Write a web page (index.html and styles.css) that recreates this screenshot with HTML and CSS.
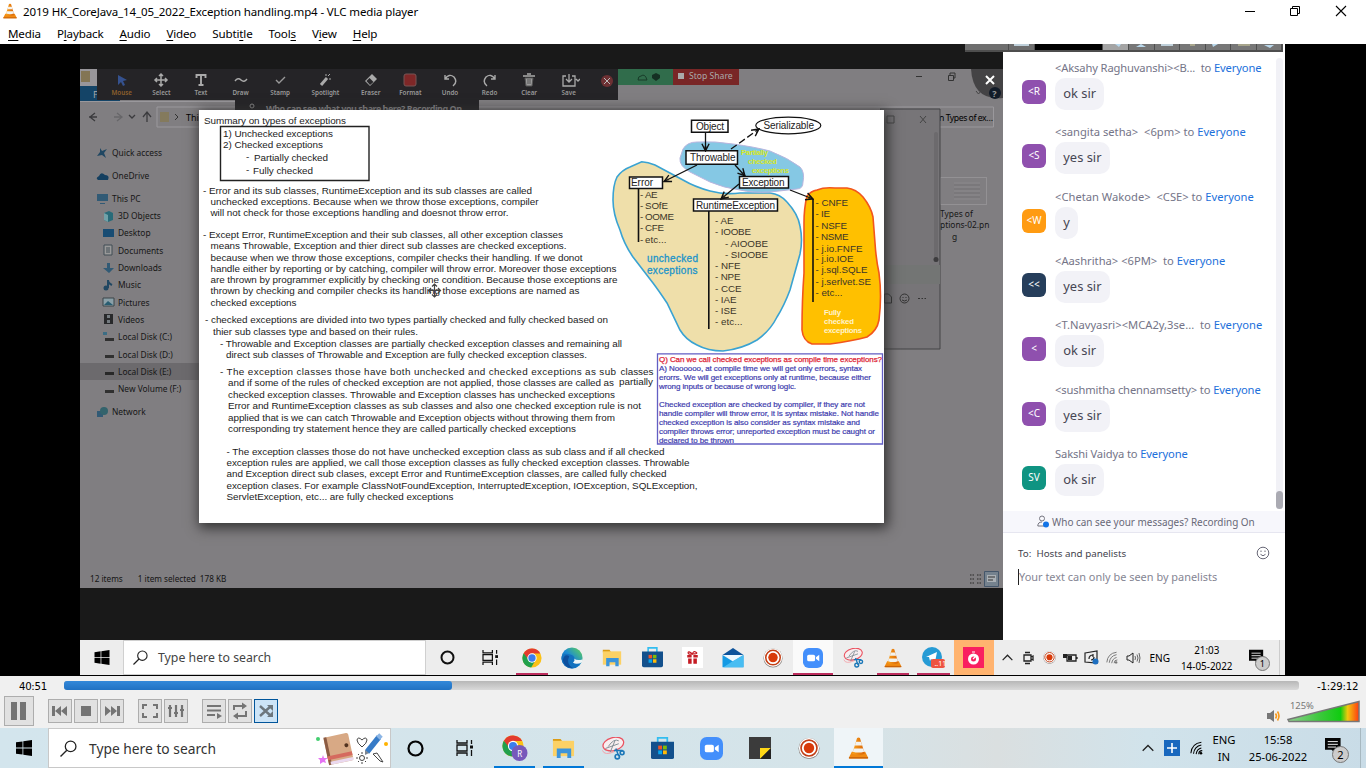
FILE: index.html
```html
<!DOCTYPE html>
<html lang="en">
<head>
<meta charset="utf-8">
<title>VLC media player</title>
<link rel="stylesheet" href="styles.css">
</head>
<body>
<svg class="defs" width="0" height="0" aria-hidden="true">
  <defs>
    <linearGradient id="coneFill"><stop offset="0" stop-color="#f9a11b"/><stop offset="1" stop-color="#d9650a"/></linearGradient>
    <linearGradient id="edgeFill" x1="0" y1="1" x2="1" y2="0"><stop offset="0" stop-color="#0c59a4"/><stop offset=".5" stop-color="#1b8ad3"/><stop offset="1" stop-color="#66d84e"/></linearGradient>
    <linearGradient id="volFill"><stop offset="0" stop-color="#8fcf8f"/><stop offset=".45" stop-color="#3cc83c"/><stop offset=".74" stop-color="#10cc10"/><stop offset=".84" stop-color="#f2c80e"/><stop offset="1" stop-color="#ff3a10"/></linearGradient>
    <marker id="arrow" viewBox="0 0 10 10" refX="9" refY="5" markerWidth="9" markerHeight="9" markerUnits="userSpaceOnUse" orient="auto"><path d="M1 1 9 5 1 9M4 3 9 5 4 7" fill="none" stroke="#111" stroke-width="1.5"/></marker>
    <symbol id="cone" viewBox="0 0 24 24"><path d="M5 16h14l3 6q0 1-1 1H3q-1 0-1-1z" fill="#f08a12"/><path d="M2 21.500h20v1.500H2z" fill="#c9620a"/><path d="M10.500 1.500q1.500-1 3 0L18.500 18q-6.500 3-13 0z" fill="url(#coneFill)"/><path d="M9.300 5.500h5.400l1.100 3.800H8.200zM7.100 12.500h9.800l1 3.300q-6 2-11.800 0z" fill="#f3f3ef"/></symbol>
    <symbol id="win" viewBox="0 0 16 16"><path d="M0 2.300 6.500 1.400v6.200H0zM7.300 1.300 16 0v7.600H7.300zM0 8.400h6.500v6.200L0 13.700zM7.300 8.400H16V16l-8.700-1.300z" fill="currentColor"/></symbol>
    <symbol id="search" viewBox="0 0 16 16"><circle cx="10" cy="6" r="5" fill="none" stroke="#222" stroke-width="1.200"/><path d="M6.400 9.600.500 15.500" stroke="#222" stroke-width="1.300"/></symbol>
    <symbol id="taskview" viewBox="0 0 18 16"><path d="M1 0v3h10V0M1 16v-3h10v3M1 5h10v6H1zM15.500 0v4M15.500 10v6" fill="none" stroke="#111" stroke-width="1.300"/><path d="M14 5.500h3v3h-3z" fill="#111"/></symbol>
    <symbol id="chrome" viewBox="0 0 24 24"><circle cx="12" cy="12" r="11.500" fill="#fbc116"/><path d="M2 6.200A11.500 11.500 0 0 1 22 6.500H12L6.500 14z" fill="#e33b2e"/><path d="M2 6.200A11.500 11.500 0 0 0 11 23.500L16 15l-8-1z" fill="#21a04c"/><circle cx="12" cy="12" r="5.600" fill="#fff"/><circle cx="12" cy="12" r="4.400" fill="#3b7ded"/></symbol>
    <symbol id="edge" viewBox="0 0 24 24"><circle cx="12" cy="12" r="11.500" fill="url(#edgeFill)"/><path d="M.800 10Q3 7 8 7.500q7 1 7 6 0 2-1.500 3 4 2 8.700-1-2.700 7-10.200 8Q2 22 .500 13z" fill="#1372bf"/><path d="M9 10q-4 8 4 13Q3 23 2 14q2-7 7-4z" fill="#0d4f9d"/><path d="M14 12.500q2 2-1 4.500 4 3 10-.500v-3q-5 2-9-1z" fill="#eef5f6"/></symbol>
    <symbol id="folder" viewBox="0 0 24 24"><path d="M1 2h8l2 3H1z" fill="#dc9c14"/><path d="M1 4h22v16H1z" fill="#fcd165"/><path d="M5 22V12h15v10h-4v-5h-7v5z" fill="#3b94db"/></symbol>
    <symbol id="store" viewBox="0 0 24 24"><path d="M7 6V1h10v5" fill="none" stroke="#32bdf0" stroke-width="1.800"/><path d="M0 5h24v16q0 2-2 2H2q-2 0-2-2z" fill="#13508c"/><path d="M7.500 9h4v4h-4z" fill="#f35325"/><path d="M12.500 9h4v4h-4z" fill="#81bc06"/><path d="M7.500 14h4v4h-4z" fill="#05a6f0"/><path d="M12.500 14h4v4h-4z" fill="#ffba08"/></symbol>
    <symbol id="gift" viewBox="0 0 24 24"><path d="M0 0h24v24H0z" fill="#fff"/><path d="M6 9h5v3H6zM13 9h5v3h-5zM7 13h4v6H7zM13 13h4v6h-4z" fill="#c51b23"/><path d="M12 8Q7 9 7 6.500T12 8q1-4 4-2t-4 2" fill="none" stroke="#c51b23" stroke-width="1.400"/></symbol>
    <symbol id="mail" viewBox="0 0 24 24"><path d="M0 9 12 1l12 8z" fill="#0d539b"/><path d="M2 9h20l-10 8z" fill="#edf8ff"/><path d="M0 9l12 7.500L24 9v14H0z" fill="#149ae4"/><path d="M12 16 24 9v14H1z" fill="#48bdf2"/></symbol>
    <symbol id="record" viewBox="0 0 24 24"><circle cx="12" cy="12" r="11.500" fill="#8c8480"/><circle cx="12" cy="11.500" r="11" fill="#fff"/><circle cx="12" cy="11.500" r="8.700" fill="none" stroke="#c23e15" stroke-width="1.800"/><circle cx="12" cy="11.500" r="5.700" fill="#d83a09"/></symbol>
    <symbol id="zoomapp" viewBox="0 0 24 24"><rect width="24" height="24" rx="7" fill="#438ffb"/><rect x="5" y="8" width="9.500" height="8" rx="2" fill="#fff"/><path d="m15.500 11 4-2.800v7.600l-4-2.800z" fill="#fff"/></symbol>
    <symbol id="snip" viewBox="0 0 24 24"><ellipse cx="12.500" cy="7.500" rx="11" ry="6.800" fill="#f8eef0" stroke="#ea5260" stroke-width="1.300" transform="rotate(-15 12 8)"/><path d="M7 10Q13 1 18 4M4 12l14-5M9 16l5-12" fill="none" stroke="#7f8c94"/><path d="M1 14q2 6 13 1" fill="none" stroke="#f3a1a8"/><path d="m13 14 9 0M15 12l3 8" stroke="#1b77b8" stroke-width="1.500"/><g fill="none" stroke="#1b77b8" stroke-width="1.700"><circle cx="16.500" cy="20.500" r="2.300"/><circle cx="21.500" cy="16.500" r="2"/></g></symbol>
    <symbol id="wifi" viewBox="0 0 16 16"><path d="M1 14Q2 3 13 1.500M4 14.500Q5 6 13 4.500M7 15q1-6 6-7M10 15q0-4 4-4" fill="none" stroke="currentColor" stroke-width="1.200"/><circle cx="12.500" cy="14" r="1.500" fill="currentColor"/></symbol>
    <symbol id="chev" viewBox="0 0 12 7"><path d="m.700 6.300 5.300-5.300 5.300 5.300" fill="none" stroke="#222" stroke-width="1.300"/></symbol>
    <symbol id="note" viewBox="0 0 24 24"><path d="M0 1h17v13h-5v4l-5-4H0z" fill="#050505"/><path d="M3 5h11M3 8h11M3 11h9" stroke="#fff"/></symbol>
    <symbol id="smile" viewBox="0 0 14 14"><circle cx="7" cy="7" r="5.800" fill="none" stroke="currentColor"/><path d="M4.500 8.300q2.500 3 5 0M5 4.500v1.500M9 4.500v1.500" fill="none" stroke="currentColor"/></symbol>
  </defs>
</svg>

<div class="app">
  <header class="titlebar">
    <svg width="16" height="18"><use href="#cone"/></svg>
    <span class="title">2019 HK_CoreJava_14_05_2022_Exception handling.mp4 - VLC media player</span>
    <svg class="winbtns" width="106" height="14"><path d="M1 7.500h10" stroke="#000"/><path d="M46.500 4.500h7v7h-7zM48.500 4v-1.500h7v7H54" fill="none" stroke="#000"/><path d="m92 2 10 10M102 2 92 12" stroke="#000" stroke-width="1.100"/></svg>
  </header>
  <nav class="menubar"><span><u>M</u>edia</span><span>P<u>l</u>ayback</span><span><u>A</u>udio</span><span><u>V</u>ideo</span><span>Subti<u>t</u>le</span><span>Tool<u>s</u></span><span>V<u>i</u>ew</span><span><u>H</u>elp</span></nav>

  <main class="video">
    <div class="capture">
      <div class="capture-top">
        <section class="stage">
          <div class="explorer">
            <aside class="tree">
              <div class="node root"><svg width="13" height="12"><path d="m4 1 2 3 5-2-3 4 2 5-4-3-5 1 3-4z" fill="#204762"/></svg>Quick access</div>
              <div class="node root"><svg width="13" height="12"><path d="M2 10Q-1 8 3 6q2-5 6-1 5 0 3 5z" fill="#143f60"/></svg>OneDrive</div>
              <div class="node root pc"><svg width="13" height="12"><path d="M1 1h11v7H1zM4 10h5v1H4z" fill="#315a75"/></svg>This PC</div>
              <div class="node"><svg width="13" height="12"><path d="m2 3 5-2 4 2v7l-5 2-4-2z" fill="#286b79"/><path d="M2 3l4 2v7l-4-2z" fill="#71a1a8"/></svg>3D Objects</div>
              <div class="node"><svg width="13" height="12"><path d="M1 2h11v8H1z" fill="#184c73"/></svg>Desktop</div>
              <div class="node"><svg width="13" height="12"><path d="M2 1h8v10H2zM4 4h4M4 6h4M4 8h4" fill="#999" stroke="#414d55"/></svg>Documents</div>
              <div class="node"><svg width="13" height="12"><path d="M5 1h3v5h4l-5 5-6-5h4z" fill="#315a75"/></svg>Downloads</div>
              <div class="node"><svg width="13" height="12"><path d="M6 9V1q0 3 4 5" fill="none" stroke="#204762" stroke-width="2"/><circle cx="4" cy="9" r="2.500" fill="#204762"/></svg>Music</div>
              <div class="node"><svg width="13" height="12"><path d="M1 2h11v8H1z" fill="#8aa0a8" stroke="#3b4449"/><path d="m2 9 4-4 5 4z" fill="#285d71"/></svg>Pictures</div>
              <div class="node"><svg width="13" height="12"><path d="M2 1h9v10H2z" fill="#28292b"/><path d="M5 2h3v3H5zM5 7h3v3H5z" fill="#747b80"/></svg>Videos</div>
              <div class="node"><svg width="13" height="12"><path d="M3 7h9v3H3z" fill="#303030"/><path d="M1 1h4v3H1z" fill="#3c6d84"/></svg>Local Disk (C:)</div>
              <div class="node"><svg width="13" height="12"><path d="M3 7h9v3H3z" fill="#303030"/></svg>Local Disk (D:)</div>
              <div class="node on"><svg width="13" height="12"><path d="M3 7h9v3H3z" fill="#282828"/></svg>Local Disk (E:)</div>
              <div class="node"><svg width="13" height="12"><path d="M3 7h9v3H3z" fill="#303030"/></svg>New Volume (F:)</div>
              <div class="node root net"><svg width="13" height="12"><path d="M1 5h6v6H1z" fill="#315a75"/><circle cx="8" cy="5" r="4" fill="#33636c"/></svg>Network</div>
            </aside>
            <footer class="status"><span>12 items</span><span>1 item selected</span><span class="kb">178 KB</span>
              <svg width="32" height="18"><path d="M2 5h4M2 9h4M2 13h4M9 5h4M9 9h4M9 13h4" stroke="#444" stroke-width="1.500" stroke-dasharray="1.500 1"/><path d="M16.500 1.500h14v15h-14z" fill="#75828e" stroke="#44566a"/><path d="M19 5h9v7h-9z" fill="#aab0b5"/><path d="M20 7h7M20 10h5" stroke="#333"/></svg></footer>
          </div>
          <svg class="chrome-layer" width="923" height="60" viewBox="80 69 923 60">
            <path d="M80 69h17v17H80z" fill="#98969a"/><path d="M81 71h9v11h-9z" fill="#837554"/><path d="M80 86h40v15H80z" fill="#144467"/><text x="93" y="98" font-size="9" fill="#aaa">F</text>
            <path d="M80 101h235v1H80z" fill="#9a989c"/>
            <path d="m95 113-5 4 5 4M89 117h8M117 113l5 4-5 4M114 117h7" fill="none" stroke="#3b3b3e" stroke-width="1.300"/><path d="M113 112h12v10h-12z" fill="#807e81" opacity=".65"/><path d="m129 115 3 3 3-3M147 122v-9m-4 4 4-5 4 5" fill="none" stroke="#3b3b3e" stroke-width="1.300"/>
            <path d="M157 107h836.500v20H157z" fill="none" stroke="#9a989c"/><path d="M160 112h9v10h-9z" fill="#847a5d"/><path d="m175 114 3 3-3 3" fill="none" stroke="#333"/>
            <text x="186" y="120.500" font-size="9">This</text><text x="939" y="120.500" font-size="8.700" textLength="54">n Types of ex…</text>
            <path d="M916 76.500h6M948.500 75.500h5v5h-5zM950 75v-2h5v5h-2" fill="none" stroke="#333" /><path d="m976 91 2.500 3 2.500-3" fill="none" stroke="#444"/>
            <path d="M971 69h32v29q-30 3-32-29" fill="#444345"/><path d="m986 76 8 8m0-8-8 8" stroke="#fff" stroke-width="2"/><circle cx="995" cy="93" r="6" fill="#121b28"/><text x="992.300" y="96.500" font-size="9" fill="#999" font-weight="bold">?</text>
            <path d="M235 100h244v12H235z" fill="#252427"/><circle cx="252" cy="106" r="2" fill="none" stroke="#888"/><text x="266" y="111.500" font-size="9" fill="#8b898c" font-weight="bold" textLength="196">Who can see what you share here? Recording On</text>
          </svg>
          <div class="share"><svg width="34" height="12"><path d="M3 9h9q-2-7-6-4-3 0-3 4z" fill="none" stroke="#183b29"/><path d="m21 2 4 2v3l-4 3-4-3V4z" fill="#153023"/></svg><b><i></i>Stop Share</b></div>
          <div class="tools">
            <div class="tool mouse"><svg width="16" height="16"><path d="m4 3 9 5-4 1 2 4-2 1-2-4-3 3z" fill="#35518e"/></svg>Mouse</div>
            <div class="tool"><svg width="16" height="16"><path d="M8 2v12M2 8h12M6 4l2-2 2 2M6 12l2 2 2-2M4 6 2 8l2 2M12 6l2 2-2 2" fill="none" stroke="#aaa" stroke-width="1.500"/></svg>Select</div>
            <div class="tool"><svg width="16" height="16"><path d="M3.500 6V3h9v3M8 3v10M5.500 13h5" fill="none" stroke="#aaa" stroke-width="1.900"/></svg>Text</div>
            <div class="tool"><svg width="16" height="16"><path d="M2 9q3-4 6-1 3 3 6-1" fill="none" stroke="#aaa" stroke-width="1.400"/></svg>Draw</div>
            <div class="tool"><svg width="16" height="16"><path d="m4 8 3 3 6-6" fill="none" stroke="#999" stroke-width="1.400"/></svg>Stamp</div>
            <div class="tool spot"><svg width="16" height="16"><path d="m4 13 6-7" stroke="#aaa" stroke-width="3"/><path d="M9 2v2M13 2l-2 2M14 7h-2" stroke="#aaa"/></svg>Spotlight</div>
            <div class="tool"><svg width="16" height="16"><path d="m2 9 7-7 5 5-7 7z" fill="#aaa"/><path d="m3.500 9 3-3 4 4-3.500 3z" fill="#28272a"/></svg>Eraser</div>
            <div class="tool"><svg width="16" height="16"><rect x="2" y="2" width="12" height="12" rx="2" fill="#7e2727" stroke="#765555"/></svg>Format</div>
            <div class="tool"><svg width="16" height="16"><path d="M3 3v4h4M3 7q4-6 9-2 4 5-1 9" fill="none" stroke="#aaa" stroke-width="1.400"/></svg>Undo</div>
            <div class="tool"><svg width="16" height="16"><path d="M13 3v4H9M13 7Q9 1 4 5q-4 5 1 9" fill="none" stroke="#aaa" stroke-width="1.400"/></svg>Redo</div>
            <div class="tool"><svg width="16" height="16"><path d="M2 4h12M6 2h4" stroke="#aaa" stroke-width="1.500"/><path d="M4 6h8l-1 8H5zM7 7v5M9 7v5" fill="#9a9a9a" stroke="#555"/></svg>Clear</div>
            <div class="tool"><svg width="22" height="16"><path d="M8 4H5v10h12V4h-3M11 2v8m-3-3 3 3 3-3M18 7l2 2 2-2" fill="none" stroke="#aaa" stroke-width="1.300"/></svg>Save</div>
            <svg class="close" width="12" height="12"><circle cx="6" cy="6" r="6" fill="#6d3033"/><path d="m3 3 6 6m0-6-6 6" stroke="#bbb"/></svg>
          </div>
          <div class="file"><div class="thumb"><i></i></div>Types of<br>ptions-02.pn<br><span>g</span></div>
          <svg class="backwin" width="61" height="243" viewBox="880 108 61 243"><path d="M880 109h60v240h-60z" fill="#777578" stroke="#454446"/><path d="M880 265h60v19h-60z" fill="#737574"/><path d="M887 116h7v7h-7zM920 116l6 7m0-7-6 7" fill="none" stroke="#444"/><rect x="934" y="132" width="4" height="130" rx="2" fill="#6c6a6d"/><circle cx="936" cy="259.500" r="2.500" fill="#3d3c3e"/><path d="M884.500 294v9h7v-6l-3-3z" fill="none" stroke="#333"/><circle cx="904.500" cy="298.500" r="4.500" fill="none" stroke="#333"/><path d="M902 300q2.500 2 5 0M903 297v1M906 297v1M918 298.500h2m1.500 0h1.500m1.500 0h1.500" stroke="#333" fill="none"/></svg>

          <svg class="board" width="685" height="413" viewBox="199 110 685 413">
            <g fill="#1b1b1b" font-size="9.900">
              <text x="204" y="123.500" textLength="142">Summary on types of exceptions</text>
              <text x="223" y="136.500" textLength="110">1) Unchecked exceptions</text>
              <text x="223" y="147.800" textLength="100">2) Checked exceptions</text>
              <text x="246" y="160">-</text><text x="254" y="161" textLength="74">Partially checked</text>
              <text x="246" y="173">-</text><text x="253" y="173.500" textLength="60">Fully checked</text>
              <text x="203" y="193.500" textLength="329">- Error and its sub classes, RuntimeException and its sub classes are called</text>
              <text x="210.500" y="204.800" textLength="328">unchecked exceptions. Because when we throw those exceptions, compiler</text>
              <text x="210.500" y="216" textLength="298">will not check for those exceptions handling and doesnot throw error.</text>
              <text x="203" y="238.200" textLength="360">- Except Error, RuntimeException and their sub classes, all other exception classes</text>
              <text x="210.500" y="249.400" textLength="356">means Throwable, Exception and thier direct sub classes are checked exceptions.</text>
              <text x="210.500" y="260.600" textLength="372">because when we throw those exceptions, compiler checks their handling. If we donot</text>
              <text x="210.500" y="271.900" textLength="406">handle either by reporting or by catching, compiler will throw error. Moreover those exceptions</text>
              <text x="210.500" y="283.100" textLength="407">are thrown by programmer explicitly by checking one condition. Because those exceptions are</text>
              <text x="210.500" y="294.300" textLength="369">thrown by checking and compiler checks its handling those exceptions are named as</text>
              <text x="210.500" y="305.500" textLength="86">checked exceptions</text>
              <text x="205" y="323.300" textLength="403">- checked exceptions are divided into two types partially checked and fully checked based on</text>
              <text x="213" y="334.500" textLength="205">thier sub classes type and based on their rules.</text>
              <text x="220" y="347" textLength="402">- Throwable and Exception classes are partially checked exception classes and remaining all</text>
              <text x="226" y="358.300" textLength="361">direct sub classes of Throwable and Exception are fully checked exception classes.</text>
              <text x="220" y="374.500" textLength="396">- The exception classes those have both unchecked and checked exceptions as sub</text><text x="620.500" y="374.500" textLength="33">classes</text>
              <text x="228" y="386" textLength="386">and if some of the rules of checked exception are not applied, those classes are called as</text><text x="619" y="385" textLength="34">partially</text>
              <text x="228" y="398" textLength="387">checked exception classes. Throwable and Exception classes has unchecked exceptions</text>
              <text x="228" y="409.300" textLength="413">Error and RuntimeException classes as sub classes and also one checked exception rule is not</text>
              <text x="228" y="420.600" textLength="387">applied that is we can catch Throwable and Exception objects without throwing them from</text>
              <text x="228" y="431.800" textLength="348">corresponding try statement hence they are called partically checked exceptions</text>
              <text x="226.500" y="454.900" textLength="438">- The exception classes those do not have unchecked exception class as sub class and if all checked</text>
              <text x="226.500" y="466.200" textLength="463">exception rules are applied, we call those exception classes as fully checked exception classes. Throwable</text>
              <text x="226.500" y="477.400" textLength="440">and Exception direct sub clases, except Error and RuntimeException classes, are called fully checked</text>
              <text x="226.500" y="488.600" textLength="471">exception clases. For example ClassNotFoundException, InterruptedException, IOException, SQLException,</text>
              <text x="226.500" y="499.800" textLength="227">ServletException, etc... are fully checked exceptions</text>
            </g>
            <path d="M220.500 126.500h148.500v54H220.500z" fill="none" stroke="#222" stroke-width="1.400"/>
            <path d="M641.700 161.700Q648 162 655 165L683 180Q695 187 710 191 725 195 740 193L770 193Q780 194 787 202 798 214 800 226 803 240 800 254L790 290Q784 306 777 317 770 331 757 340 742 349 723 351 708 351 697 345 686 340 680 330L667 303Q659 291 653 283L633 257Q624 244 620 230 613 214 613 200 613 185 617 177 622 170 630 167Z" fill="#efdfaa" stroke="#3aa3d2" stroke-width="1.600"/>
            <path d="M683 149Q687 142 697 142 715 141 733 144 755 147 770 151 788 158 800 167 805 172 803 182 803 189 797 189L770 192Q752 193 740 190 724 188 710 182L690 172Q679 166 680 158Z" fill="#85c8e4" stroke="#b9b5de"/>
            <path d="M817 190Q824 187 835 188L847 188Q856 189 863 197 871 207 873 217L875 243Q876 259 879 273 882 296 879 320 877 331 867 337 852 341 830 344L812 344Q803 341 802 330 802 300 804 273L804 223Q804 208 807 196 811 191 817 190Z" fill="#ffc000" stroke="#f2561d" stroke-width="1.600"/>
            <g fill="#fff" stroke="#111" stroke-width="1.500"><path d="M691.500 120.300h36.500v12h-36.500zM686 150.800h51.500v13.500H686zM629.500 177h33v11.500h-33zM739.500 176.500h49v11.500h-49zM693.500 199h84v12h-84z"/><ellipse cx="788.300" cy="125.500" rx="32.500" ry="8.300" stroke-width="1.200"/></g>
            <g fill="none" stroke="#111" stroke-width="1.300"><path d="M705.500 133v18" marker-end="url(#arrow)"/><path d="m731 149 28-20" stroke-dasharray="7 3" marker-end="url(#arrow)"/><path d="m697 165-33 16.500" marker-end="url(#arrow)"/><path d="m735 165 10 11" marker-end="url(#arrow)"/><path d="m739 184-18 15" marker-end="url(#arrow)"/><path d="m790 190 23 9" marker-end="url(#arrow)"/><path d="M638.500 189v53M708.800 211v118M813 199v103" stroke-width="1.600"/></g>
            <g fill="#222" font-size="10">
              <text x="696" y="129.800" textLength="28">Object</text><text x="763.500" y="129" textLength="50.500">Serializable</text><text x="690" y="161" textLength="45.500">Throwable</text><text x="631" y="186.300" textLength="22">Error</text><text x="742" y="185.800" textLength="42.500">Exception</text><text x="696" y="209" textLength="79">RuntimeException</text>
            </g>
            <g fill="#3b3528" font-size="9.800">
              <text x="640" y="197.500">-</text><text x="645" y="197.500" textLength="12.500">AE</text><text x="640" y="208.800">-</text><text x="645" y="208.800" textLength="23">SOfE</text><text x="640" y="220">-</text><text x="645" y="220" textLength="29">OOME</text><text x="640" y="231.300">-</text><text x="645" y="231.300" textLength="19">CFE</text><text x="640" y="242.500">-</text><text x="645" y="242.500" textLength="21.500">etc...</text>
              <text x="715" y="224" textLength="18.500">- AE</text><text x="715" y="235.300" textLength="36">- IOOBE</text><text x="725" y="246.500" textLength="43">- AIOOBE</text><text x="725" y="257.800" textLength="43">- SIOOBE</text><text x="715" y="269" textLength="25.500">- NFE</text><text x="715" y="280.200" textLength="25.500">- NPE</text><text x="715" y="291.500" textLength="26.500">- CCE</text><text x="715" y="302.700" textLength="21.500">- IAE</text><text x="715" y="314" textLength="21.500">- ISE</text><text x="715" y="325.300" textLength="27.500">- etc...</text>
              <text x="815.500" y="206" textLength="32.500">- CNFE</text><text x="815.500" y="217.300" textLength="14.500">- IE</text><text x="815.500" y="228.500" textLength="31.500">- NSFE</text><text x="815.500" y="239.800" textLength="33">- NSME</text><text x="815.500" y="251.500" textLength="47">- j.io.FNFE</text><text x="815.500" y="262.300" textLength="38">- j.io.IOE</text><text x="815.500" y="273.300" textLength="52">- j.sql.SQLE</text><text x="815.500" y="284.500" textLength="55.500">- j.serlvet.SE</text><text x="815.500" y="296" textLength="27">- etc...</text>
            </g>
            <g fill="#1d94c9" stroke="#1d94c9" stroke-width=".3" font-size="10"><text x="647" y="262.300" textLength="51">unchecked</text><text x="647" y="273.500" textLength="50.500">exceptions</text></g>
            <g fill="#d4e62a" font-size="7.800" font-weight="bold"><text x="741" y="154.500" textLength="27">Partially</text><text x="748" y="163.800" textLength="29">checked</text><text x="752" y="173" textLength="37">exceptions</text></g>
            <g fill="#fff3cb" font-size="7.800" font-weight="bold"><text x="824" y="314.500" textLength="17">Fully</text><text x="824" y="323.500" textLength="30">checked</text><text x="824" y="332.600" textLength="38">exceptions</text></g>
            <path d="M657.500 353.800h225v90.200h-225z" fill="#fff" stroke="#625ec4" stroke-width="1.300"/>
            <text x="659" y="361.500" font-size="8" fill="#dd2637" stroke="#dd2637" stroke-width=".25" textLength="223">Q) Can we call checked exceptions as compile time exceptions?</text>
            <g fill="#3e3cae" stroke="#3e3cae" stroke-width=".2" font-size="8"><text x="659" y="370.600" textLength="203">A) Noooooo, at compile time we will get only errors, syntax</text><text x="659" y="379.600" textLength="212">erorrs. We will get exceptions only at runtime, because either</text><text x="659" y="388.700" textLength="137">wrong inputs or because of wrong logic.</text><text x="659" y="406.800" textLength="206">Checked exception are checked by compiler, if they are not</text><text x="659" y="415.800" textLength="220">handle compiler will throw error, it is syntax mistake. Not handle</text><text x="659" y="424.900" textLength="201">checked exception is also consider as syntax mistake and</text><text x="659" y="434" textLength="216">compiler throws error; unreported exception must be caught or</text><text x="659" y="442.800" textLength="75">declared to be thrown</text></g>
            <path d="M434.500 284v13M428 290.500h13M432 286.500l2.500-2.500 2.500 2.500M432 294.500l2.500 2.500 2.500-2.500M431 288l-2.500 2.500 2.500 2.500M438 288l2.500 2.500-2.500 2.500" fill="none" stroke="#444" stroke-width="1.200"/>
          </svg>
        </section>

        <section class="chat">
          <svg class="strip" width="320" height="8"><path d="M0 0h318v8H0z" fill="#4e4e4e"/><path d="M0 0h43v6H0zM44 0h25v6H44z" fill="#6e6e6e"/><path d="M70 0h67v6H70z" fill="#000"/><path d="M138 0h25v6h-25z" fill="#a4a4a4"/><path d="M164 0h25v6h-25zM190 0h24v6h-24zM215 0h25v6h-25zM241 0h24v6h-24zM266 0h25v6h-25zM292 0h24v6h-24z" fill="#777"/><path d="M49 1h15M196 1h12" stroke="#bfd0da" stroke-width="2"/><path d="m171 3 5-3 5 3zM150 0h6l-2 3zM247 0h6l-5 3zM299 1h10l-4 3z" fill="#b9d8ec"/><path d="M225 1h5M273 1h12" stroke="#d6d2a0"/></svg>
          <div class="messages">
            <article><i class="av purple">&lt;R</i><div><p class="tight">&lt;Aksahy Raghuvanshi&gt;&lt;B...&nbsp; to <b>Everyone</b></p><span>ok sir</span></div></article>
            <article><i class="av purple">&lt;S</i><div><p>&lt;sangita setha&gt;&nbsp; &lt;6pm&gt; to <b>Everyone</b></p><span>yes sir</span></div></article>
            <article><i class="av orange">&lt;W</i><div><p>&lt;Chetan Wakode&gt;&nbsp; &lt;CSE&gt; to <b>Everyone</b></p><span>y</span></div></article>
            <article><i class="av navy">&lt;&lt;</i><div><p>&lt;Aashritha&gt; &lt;6PM&gt;&nbsp; to <b>Everyone</b></p><span>yes sir</span></div></article>
            <article><i class="av purple">&lt;</i><div><p>&lt;T.Navyasri&gt;&lt;MCA2y,3se...&nbsp; to <b>Everyone</b></p><span>ok sir</span></div></article>
            <article><i class="av purple">&lt;C</i><div><p class="tight">&lt;sushmitha chennamsetty&gt; to <b>Everyone</b></p><span>yes sir</span></div></article>
            <article><i class="av teal">SV</i><div><p class="tight">Sakshi Vaidya to <b>Everyone</b></p><span>ok sir</span></div></article>
            <div class="scroll"></div>
          </div>
          <div class="notice"><svg width="13" height="13"><circle cx="5" cy="3.500" r="2.500" fill="none" stroke="#74747f"/><path d="M7 11H.800q0-4 4.200-4" fill="none" stroke="#74747f"/><circle cx="9" cy="9.500" r="3" fill="#1273e6"/></svg>Who can see your messages? Recording On</div>
          <div class="composer"><div class="to"><span>To:&nbsp; Hosts and panelists</span><svg width="14" height="14"><use href="#smile"/></svg></div><div class="input">Your text can only be seen by panelists</div></div>
        </section>
      </div>

      <div class="taskbar inner">
        <div class="start"><svg width="16" height="15"><use href="#win"/></svg></div>
        <div class="search"><svg width="15" height="15"><use href="#search"/></svg><span>Type here to search</span></div>
        <div class="apps">
          <div class="sys"><svg width="15" height="15"><circle cx="7.500" cy="7.500" r="6" fill="none" stroke="#111" stroke-width="2"/></svg></div>
          <div class="sys"><svg width="17" height="15"><use href="#taskview"/></svg></div>
          <div class="run"><svg width="20" height="20"><use href="#chrome"/></svg></div>
          <div><svg width="22" height="22"><use href="#edge"/></svg></div>
          <div><svg width="20" height="20"><use href="#folder"/></svg></div>
          <div><svg width="21" height="21"><use href="#store"/></svg></div>
          <div><svg width="21" height="21"><use href="#gift"/></svg></div>
          <div><svg width="22" height="21"><use href="#mail"/></svg></div>
          <div><svg width="20" height="20"><use href="#record"/></svg></div>
          <div class="run active"><svg width="20" height="20"><use href="#zoomapp"/></svg></div>
          <div><svg width="22" height="20"><use href="#snip"/></svg></div>
          <div class="run"><svg width="20" height="20"><use href="#cone"/></svg></div>
          <div class="run tele"><svg width="24" height="24" viewBox="0 0 24 24"><circle cx="11" cy="11" r="10" fill="#269bd5"/><path d="m5 11 11-5-2 10-4-3-1 2-1-4z" fill="#fff"/><rect x="10" y="13" width="14" height="9" rx="2" fill="#ee5340"/></svg><small>..11</small></div>
          <div class="hot"><svg width="21" height="21" viewBox="0 0 21 21"><path d="M0 0h21v21H0z" fill="#f91f60"/><circle cx="10.500" cy="12" r="4" fill="none" stroke="#fff" stroke-width="3"/><path d="m9 5h3M10 12l3-3" stroke="#fff" stroke-width="1.200"/></svg></div>
        </div>
        <div class="tray">
          <div><svg width="11" height="7"><use href="#chev"/></svg></div>
          <div><svg width="13" height="14"><path d="M2 4h7v6H2zM9 6l2-1v4L9 8M3 1.500h5M3 12.500h5" fill="none" stroke="#222" stroke-width="1.300"/></svg></div>
          <div><svg width="13" height="13"><use href="#record"/></svg></div>
          <div><svg width="15" height="12"><path d="M4 3h9v6H4zM14 5v2" fill="none" stroke="#222" stroke-width="1.300"/><path d="M5 4h4v4H5zM0 2h4v4H0z" fill="#222"/></svg></div>
          <div><svg width="15" height="15"><path d="m1 3 12-2v12L1 12zM5 9q0-4 4-4m0-1v3M10 7q0 3-3 3" fill="none" stroke="#222" stroke-width="1.200"/><circle cx="11.500" cy="11.500" r="3" fill="#1e6fc0"/></svg></div>
          <div class="dim"><svg width="13" height="13"><use href="#wifi"/></svg></div>
          <div><svg width="15" height="12"><path d="M1 4h2l4-3v10L3 8H1z" fill="none" stroke="#222"/><path d="M9 4q1 2 0 4M11 2.500q2 3.500 0 7M13 1q2 5 0 10" fill="none" stroke="#666"/></svg></div>
        </div>
        <div class="lang">ENG</div>
        <div class="clock"><span>21:03</span><span>14-05-2022</span></div>
        <div class="notif"><svg width="20" height="20"><use href="#note"/></svg><em>1</em></div>
      </div>
    </div>
  </main>

  <section class="controls">
    <div class="timeline"><span class="elapsed">40:51</span><div class="seek"><i></i></div><span class="remain">-1:29:12</span></div>
    <div class="buttons">
      <button class="big"><svg width="28" height="28"><path d="M6 5h6v18H6zM15 5h6v18h-6z" fill="#747474"/></svg></button>
      <div class="group"><button><svg width="22" height="22"><path d="M3 6h3v10H3zM12 6v10l-6-5zM18 6v10l-6-5z" fill="#747474"/></svg></button><button><svg width="22" height="22"><path d="M6 6h10v10H6z" fill="#747474"/></svg></button><button><svg width="22" height="22"><path d="M16 6h3v10h-3zM10 6v10l6-5zM4 6v10l6-5z" fill="#747474"/></svg></button></div>
      <div class="group"><button><svg width="22" height="22"><path d="M4 9V5h4M14 5h4v4M18 13v4h-4M8 17H4v-4" fill="none" stroke="#747474" stroke-width="2"/></svg></button><button><svg width="22" height="22"><path d="M5 5v12M11 5v12M17 5v12M3 8h4M9 13h4M15 10h4" fill="none" stroke="#747474" stroke-width="2.200"/></svg></button></div>
      <div class="group"><button><svg width="22" height="22"><path d="M4 6h14M4 10.500h14M4 15h8" stroke="#747474" stroke-width="2"/><path d="m14 13 5 3-5 3z" fill="#747474"/></svg></button><button><svg width="22" height="22"><path d="M5 10V6h9M17 11v5H7" fill="none" stroke="#747474" stroke-width="2"/><path d="m13 2.500 5 3.500-5 3.500zM9 12.500v7L4 16z" fill="#747474"/></svg></button><button class="on"><svg width="22" height="22"><path d="m5 6 11 10M5 16 16 6" stroke="#6d777e" stroke-width="2.400"/><path d="M12 5h6v6zM12 17h6v-6z" fill="#6d777e"/></svg></button></div>
      <div class="volume"><svg width="16" height="14"><path d="M1 4h3l4-3v12L4 10H1z" fill="#777"/><path d="M9.500 4.500q2 2.500 0 5M11.500 2.500q3 4.500 0 9" fill="none" stroke="#f99a1b" stroke-width="1.600"/></svg>
        <div class="slider"><svg width="76" height="24"><path d="M2 20.500 73 2.500v20H3z" fill="url(#volFill)" stroke="#777" stroke-width="1.500"/></svg><span>125%</span></div></div>
    </div>
  </section>

  <footer class="taskbar outer">
    <div class="start"><svg width="16" height="16"><use href="#win"/></svg></div>
    <div class="search"><svg width="17" height="17"><use href="#search"/></svg><span>Type here to search</span>
      <svg class="doodle" width="76" height="36" viewBox="0 0 76 36"><g transform="rotate(-12 24 19)"><rect x="12" y="5" width="25" height="28" rx="2" fill="#d8a985"/><path d="M12 5h3v28h-3z" fill="#8b5b43"/><path d="M12 24h25v4H12z" fill="#d56a5e"/><path d="M14 30h23v3H14z" fill="#ead9ef"/><circle cx="33" cy="17" r="2" fill="#52321f"/></g><circle cx="4" cy="9" r="2" fill="#43ce70"/><circle cx="72" cy="14" r="2" fill="#ffb300"/><path d="m9 25 1 3 4 0-3 2 1 3-3-1-3 2 0-4-2-2 4 0z" fill="#e573f3"/><path d="m53 22 12-15" stroke="#367bc7" stroke-width="5.500"/><path d="m51 20 4 3-4 2z" fill="#7c8590"/><path d="m64 8 3-3" stroke="#8bb5e5" stroke-width="5"/><path d="m43 10q1-4 5 0 4-4 5 0 0 3-5 7-5-4-5-7zM59 24l4-1 6 9-3-1z" fill="none" stroke="#444"/><circle cx="48" cy="28" r="2.500" fill="none" stroke="#444"/><path d="M48 22v2M48 32v2M42 28h2M52 28h2M44 24l1 1M51 31l1 1M44 32l1-1" stroke="#444"/></svg></div>
    <div class="apps">
      <div class="sys"><svg width="17" height="17"><circle cx="8.500" cy="8.500" r="7" fill="none" stroke="#050505" stroke-width="2.200"/></svg></div>
      <div class="sys"><svg width="18" height="16"><use href="#taskview"/></svg></div>
      <div class="run"><svg class="ch" width="26" height="26" viewBox="0 0 26 26"><use href="#chrome" width="22" height="22"/><circle cx="17.500" cy="18" r="8" fill="#7759bb"/></svg><small>R</small></div>
      <div class="run"><svg width="23" height="23"><use href="#folder"/></svg></div>
      <div><svg width="24" height="23"><use href="#snip"/></svg></div>
      <div><svg width="23" height="23"><use href="#store"/></svg></div>
      <div><svg width="23" height="23"><use href="#zoomapp"/></svg></div>
      <div><svg width="22" height="22"><path d="M0 0h22v22H0z" fill="#3b3b3b"/><path d="M11 22V11h11z" fill="#ffd817"/><path d="M11 22 22 11v11z" fill="#222"/></svg></div>
      <div><svg width="22" height="23"><use href="#record"/></svg></div>
      <div class="run active"><svg width="23" height="24"><use href="#cone"/></svg></div>
    </div>
    <div class="tray"><div><svg width="12" height="8"><use href="#chev"/></svg></div><div><svg width="16" height="16"><path d="M0 0h16v16H0z" fill="#1968be"/><path d="M8 3v10M3 8h10" stroke="#fff" stroke-width="1.600"/></svg></div><div><svg width="14" height="14"><use href="#wifi"/></svg></div></div>
    <div class="lang"><span>ENG</span><span>IN</span></div>
    <div class="clock"><span>15:58</span><span>25-06-2022</span></div>
    <div class="notif"><svg width="22" height="22"><use href="#note"/></svg><em>2</em></div>
  </footer>
</div>
</body>
</html>
```
FILE: styles.css
```css
* { box-sizing: border-box; }
body { margin: 0; font-family: "Noto Sans", "Open Sans", sans-serif; color: #000; }
svg { display: block; flex: none; }
.defs { position: absolute; }
p { margin: 0; }
i, em { font-style: normal; }
.app { width: 1366px; height: 768px; display: flex; flex-direction: column; overflow: hidden; background: #fff; white-space: nowrap; }

.titlebar { height: 24px; display: flex; align-items: center; padding: 0 16px 2px 2px; gap: 5px; font-size: 11.5px; letter-spacing: -.13px; }
.winbtns { margin: -1px 0 0 auto; }
.menubar { height: 20px; display: flex; align-items: center; padding: 0 0 1px 8px; gap: 16px; font-size: 11.6px; letter-spacing: -.16px; }
.menubar u { text-underline-offset: 2px; }

.video { height: 632px; background: #000; padding: 0 81px 0 80px; }
.capture { width: 1205px; height: 631px; display: flex; flex-direction: column; }
.capture-top { height: 596px; display: flex; }

.stage { position: relative; width: 923px; height: 596px; background: #191919; overflow: hidden; }
.stage svg text { font-family: "Noto Sans", sans-serif; }
.stage .board text { font-family: "Liberation Sans", Arial, sans-serif; }
.explorer { margin-top: 25px; height: 519px; background: #807e81; display: flex; flex-direction: column; }
.tree { flex: 1; padding-top: 72px; width: 119px; font-size: 8.4px; color: #161616; }
.node { height: 17.3px; padding-left: 22px; display: flex; align-items: center; gap: 3px; }
.root { padding-left: 16px; height: 23px; }
.pc { margin-bottom: -3px; }
.on { background: #6c6a6d; }
.net { height: 29px; }
.status { height: 19px; display: flex; align-items: center; padding: 0 3px 0 10px; gap: 15px; font-size: 8.2px; color: #151515; }
.status .kb { margin-left: -11px; }
.status svg { margin-left: auto; }
.chrome-layer { position: absolute; left: 0; top: 25px; }
.share { position: absolute; left: 538px; top: 25px; width: 121px; height: 16px; background: #306c4b; display: flex; justify-content: flex-end; align-items: center; gap: 4px; font-size: 8.6px; color: #aaa; }
.share b { height: 16px; width: 66px; background: #792626; font-weight: 400; display: flex; align-items: center; padding: 0 0 2px 5px; gap: 5px; }
.share b i { width: 6px; height: 6px; background: #aaa; }
.tools { position: absolute; left: 17px; top: 25px; width: 521px; height: 31px; background: #252427; color: #999; display: flex; padding: 3px 0 0 5px; font-size: 6.3px; font-weight: 600; }
.tool { width: 39.6px; display: flex; flex-direction: column; align-items: center; line-height: 9px; }
.spot { width: 51px; }
.mouse { color: #8d602c; }
.close { margin: 3px 0 0 12px; }
.file { position: absolute; left: 860px; top: 133px; width: 60px; color: #171717; font-size: 8.4px; line-height: 11.3px; }
.file span { padding-left: 12px; }
.thumb { width: 47px; height: 28px; border: 1px solid #939194; margin: 0 0 3px; padding: 4px 0 0 13px; }
.thumb i { display: block; width: 26px; height: 18px; background: repeating-linear-gradient(#858386 0 2px, #7a787b 2px 4px); }
.backwin { position: absolute; left: 800px; top: 64px; }
.board { position: absolute; left: 119px; top: 66px; background: #fff; box-shadow: 2px 3px 12px 2px #333; }

.chat { position: relative; width: 282px; height: 596px; padding-top: 8px; background: #fff; color: #747487; }
.strip { position: absolute; right: 0; top: 0; }
.messages { position: relative; height: 459px; padding: 7px 0 0 19px; }
article { height: 64.35px; display: flex; gap: 9px; }
.av { width: 24px; height: 24px; margin-top: 21px; border-radius: 6px; font-size: 10px; color: #fff; text-align: center; line-height: 22px; }
.purple { background: #8f50ae; } .orange { background: #ff9b12; } .navy { background: #263e5b; } .teal { background: #0f9482; }
article p { height: 19px; line-height: 18px; font-size: 11.2px; }
article .tight { letter-spacing: -.14px; }
article b { color: #1c70db; font-weight: 400; }
article div > span { display: inline-block; height: 32px; line-height: 31px; padding: 0 8.300px; border-radius: 10px; background: #f2f2f7; color: #464653; font-size: 12.9px; }
.scroll { position: absolute; right: 2px; top: 6px; width: 7px; height: 451px; border-radius: 4px; background: #f1f1f6; }
.scroll::after { content: ""; position: absolute; left: 0; bottom: 0; width: 7px; height: 18px; border-radius: 4px; background: #aaaab2; }
.notice { height: 22px; background: #f7f7fc; border-bottom: 1px solid #e6e6f0; display: flex; align-items: center; padding-left: 34px; gap: 2px; font-size: 9.95px; color: #686877; }
.composer { padding: 11px 15px; }
.to { display: flex; justify-content: space-between; align-items: center; height: 18px; font-size: 9.8px; color: #3f3f4c; }
.to svg { color: #686877; }
.input { margin-top: 7px; border-left: 1px solid #222; height: 16px; line-height: 16px; font-size: 10.95px; color: #858593; }

.taskbar { display: flex; align-items: stretch; }
.taskbar > div, .apps > div, .tray > div { display: flex; align-items: center; justify-content: center; flex: none; }
.taskbar .apps, .taskbar .tray { align-items: stretch; }
.taskbar .search { background: #fff; justify-content: flex-start; color: #444; }
.apps > div { position: relative; }
.run::after { content: ""; position: absolute; bottom: 0; left: 4px; right: 4px; height: 2px; background: #bc2c5d; }
.active { background: #fafafa; }
.active::after { left: 0; right: 0; }
.clock, .lang { flex-direction: column; }
.notif { position: relative; }
.notif em { position: absolute; border-radius: 50%; background: #ccc; border: 1px solid #777; text-align: center; }

.inner { height: 35px; background: #ededed; }
.inner .start { width: 43px; }
.inner .search { width: 303px; border: 1px solid #d0d0d0; padding-left: 9px; gap: 10px; font-size: 12.3px; }
.inner .apps { margin-left: -.5px; }
.inner .apps > div { width: 40.2px; }
.inner .apps > .sys { width: 43px; }
.inner .tray > div { width: 21px; }
.inner .tray { margin-left: 3px; }
.dim { color: #777; }
.inner .lang { width: 32px; font-size: 10.1px; }
.inner .clock { width: 62px; font-size: 9.9px; line-height: 16px; }
.inner .notif { width: 42px; border-right: 1px solid #ccc; }
.inner .notif em { left: 17px; top: 16px; width: 15px; height: 15px; font-size: 9px; line-height: 13px; }
.inner .notif svg { margin: 0 0 -2px 2px; }
.hot { background: #ffb36f; }
.tele small { position: absolute; left: 21px; top: 19px; font-size: 7px; line-height: 9px; color: #fff; }

.controls { height: 52px; background: #f0f0f0; }
.timeline { height: 20px; display: flex; align-items: center; padding-left: 19px; font-family: "DejaVu Sans", sans-serif; font-size: 10.2px; }
.elapsed { width: 45px; letter-spacing: -.3px; }
.seek { width: 1235px; height: 9px; margin-top: -2px; border-radius: 3px; background: linear-gradient(#b7b7b7, #d9d9d9); }
.seek i { display: block; width: 388px; height: 9px; border-radius: 3px; background: linear-gradient(#3388d9, #2172c3); }
.remain { margin-left: 18px; letter-spacing: -.2px; }
.buttons { height: 30px; display: flex; align-items: center; padding: 0 4px; gap: 14px; }
.group { display: flex; gap: 2px; }
button { width: 24px; height: 24px; padding: 0; border: 1px solid #adadad; background: #e1e1e1; }
.big { width: 30px; height: 30px; }
button.on { background: #cce4f7; border-color: #00559b; }
.volume { margin-left: auto; display: flex; align-items: flex-end; gap: 4px; }
.slider { position: relative; }
.slider span { position: absolute; left: 4px; top: 0; font-size: 9.4px; color: #777; }

.outer { height: 40px; background: linear-gradient(90deg, #d3e5ed, #d5e4e9 62%, #dadfe0 73%, #d1e3eb 84%, #c9dce7); }
.outer .start { width: 48px; }
.outer .search { width: 343px; border: 1px solid #c8c8c8; padding-left: 11px; gap: 12px; font-size: 13.8px; color: #333; }
.outer .doodle { margin-left: auto; }
.outer .apps > div { width: 49.1px; }
.outer .apps > .sys { width: 49.6px; }
.outer .run::after { background: #0078d7; }
.outer .active { background: #eff5f8; }
.outer .active::after { left: 0; right: 0; }
.ch + small { position: absolute; left: 25px; top: 20px; width: 9px; text-align: center; font-size: 8px; line-height: 11px; color: #fff; }
.outer .tray { margin-left: auto; }
.outer .tray > div { width: 24.5px; }
.outer .lang { width: 30px; font-size: 11.300px; line-height: 17px; }
.outer .clock { width: 78px; font-size: 11.200px; line-height: 17px; }
.outer .notif { width: 44px; margin-right: 5px; padding-right: 6px; border-right: 1px solid #a7b8c0; }
.outer .notif em { left: 15px; top: 18px; width: 17px; height: 17px; font-size: 11px; line-height: 15px; }
```
